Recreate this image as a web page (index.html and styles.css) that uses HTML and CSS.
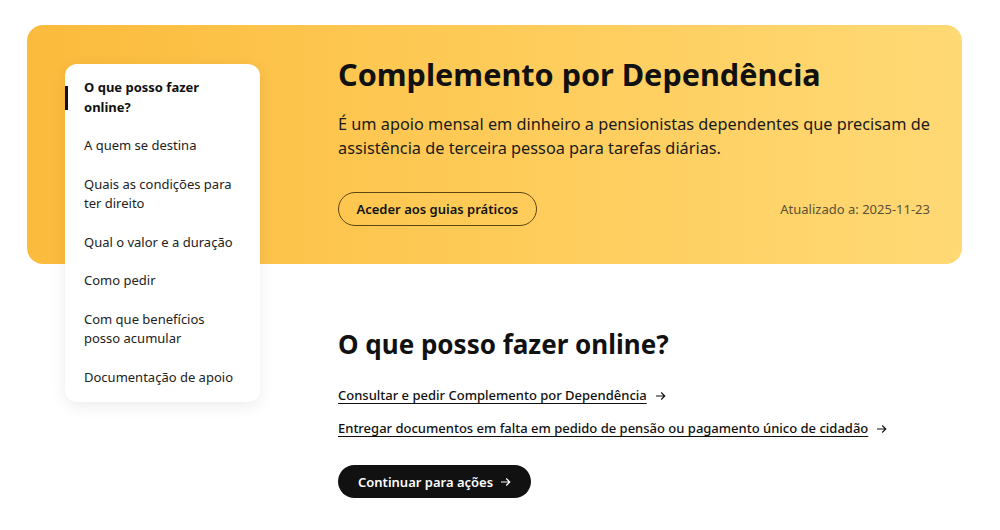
FILE: index.html
```html
<!DOCTYPE html>
<html lang="pt">
<head>
  <meta charset="UTF-8">
  <title>Complemento por Dependência</title>
  <link rel="stylesheet" href="styles.css">
</head>
<body>
  <!-- HERO -->
  <div class="hero">
    <nav class="side-nav">
      <a class="nav-item active" href="#online">O que posso fazer online?</a>
      <a class="nav-item" href="#">A quem se destina</a>
      <a class="nav-item" href="#">Quais as condições para ter direito</a>
      <a class="nav-item" href="#">Qual o valor e a duração</a>
      <a class="nav-item" href="#">Como pedir</a>
      <a class="nav-item" href="#">Com que benefícios posso acumular</a>
      <a class="nav-item" href="#">Documentação de apoio</a>
    </nav>

    <div class="hero-content">
      <h1>Complemento por Dependência</h1>
      <p class="lead">É um apoio mensal em dinheiro a pensionistas dependentes que precisam de assistência de terceira pessoa para tarefas diárias.</p>
      <div class="hero-footer">
        <a class="btn-outline" href="#">Aceder aos guias práticos</a>
        <span class="updated">Atualizado a: 2025-11-23</span>
      </div>
    </div>
  </div>

  <!-- ONLINE SECTION -->
  <section class="online" id="online">
    <h2>O que posso fazer online?</h2>
    <ul class="link-list">
      <li>
        <a href="#">Consultar e pedir Complemento por Dependência</a>
        <svg class="arrow" width="11" height="10" viewBox="0 0 11 10"><path d="M1 5h9M6.2 1.5L9.8 5 6.2 8.5" fill="none" stroke="currentColor" stroke-width="1.1"/></svg>
      </li>
      <li>
        <a href="#">Entregar documentos em falta em pedido de pensão ou pagamento único de cidadão</a>
        <svg class="arrow" width="11" height="10" viewBox="0 0 11 10"><path d="M1 5h9M6.2 1.5L9.8 5 6.2 8.5" fill="none" stroke="currentColor" stroke-width="1.1"/></svg>
      </li>
    </ul>
    <a class="btn-dark" href="#">Continuar para ações
      <svg class="arrow" width="11" height="10" viewBox="0 0 11 10"><path d="M1 5h9M6.2 1.5L9.8 5 6.2 8.5" fill="none" stroke="currentColor" stroke-width="1.2"/></svg>
    </a>
  </section>
</body>
</html>
```

FILE: styles.css
```css
body {
  margin: 0;
  font-family: "Noto Sans", "Open Sans", sans-serif;
  color: #111;
  background: #fff;
}

a {
  color: inherit;
}

.hero {
  display: flex;
  align-items: flex-start;
  gap: 78px;
  height: 239px;
  margin: 25px 38px 0 27px;
  padding: 0 32px 0 38px;
  border-radius: 16px;
  background: linear-gradient(90deg, #fbbb3c 0%, #fecb58 50%, #ffd975 100%);
}

/* side navigation card, hangs below the banner */
.side-nav {
  position: relative;
  flex: 0 0 195px;
  display: flex;
  flex-direction: column;
  gap: 19px;
  margin-top: 39px;
  padding: 14px 20px 15px 19px;
  box-sizing: border-box;
  background: #fff;
  border-radius: 12px;
  box-shadow: 0 4px 16px rgba(0, 0, 0, 0.08);
}

.nav-item {
  font-size: 13px;
  line-height: 19.5px;
  color: #222;
  text-decoration: none;
}

.nav-item.active {
  font-weight: 700;
  color: #111;
}

.nav-item.active::before {
  content: "";
  position: absolute;
  left: 0;
  top: 22px;
  width: 3px;
  height: 24px;
  background: #111;
}

.hero-content {
  flex: 1;
  padding-top: 31px;
}

h1 {
  margin: 0;
  font-size: 30.6px;
  line-height: 36px;
  font-weight: 700;
}

.lead {
  margin: 21px 0 0;
  font-size: 16.3px;
  line-height: 23.5px;
  color: #1a1a1a;
}

.hero-footer {
  display: flex;
  justify-content: space-between;
  align-items: center;
  margin-top: 32px;
}

.btn-outline {
  display: inline-flex;
  align-items: center;
  height: 34px;
  padding: 0 17.5px;
  box-sizing: border-box;
  border: 1px solid #5c4713;
  border-radius: 17px;
  font-size: 13px;
  font-weight: 600;
  text-decoration: none;
}

.updated {
  font-size: 13px;
  color: #5b5139;
}

.online {
  margin: 64px 0 0 338px;
}

h2 {
  margin: 0;
  font-size: 26px;
  line-height: 32px;
  font-weight: 700;
}

.link-list {
  list-style: none;
  margin: 26px 0 0;
  padding: 0;
  display: flex;
  flex-direction: column;
  gap: 14px;
}

.link-list li {
  display: flex;
  align-items: center;
  gap: 8px;
  font-size: 13px;
  line-height: 19px;
}

.link-list a {
  font-weight: 500;
  text-decoration: underline;
  text-underline-offset: 3px;
  text-decoration-thickness: 1px;
}

.arrow {
  flex: none;
}

.btn-dark {
  display: inline-flex;
  align-items: center;
  gap: 7px;
  height: 33px;
  margin-top: 27px;
  padding: 0 20px;
  border-radius: 17px;
  background: #111;
  color: #fff;
  font-size: 13px;
  font-weight: 600;
  text-decoration: none;
}
```
